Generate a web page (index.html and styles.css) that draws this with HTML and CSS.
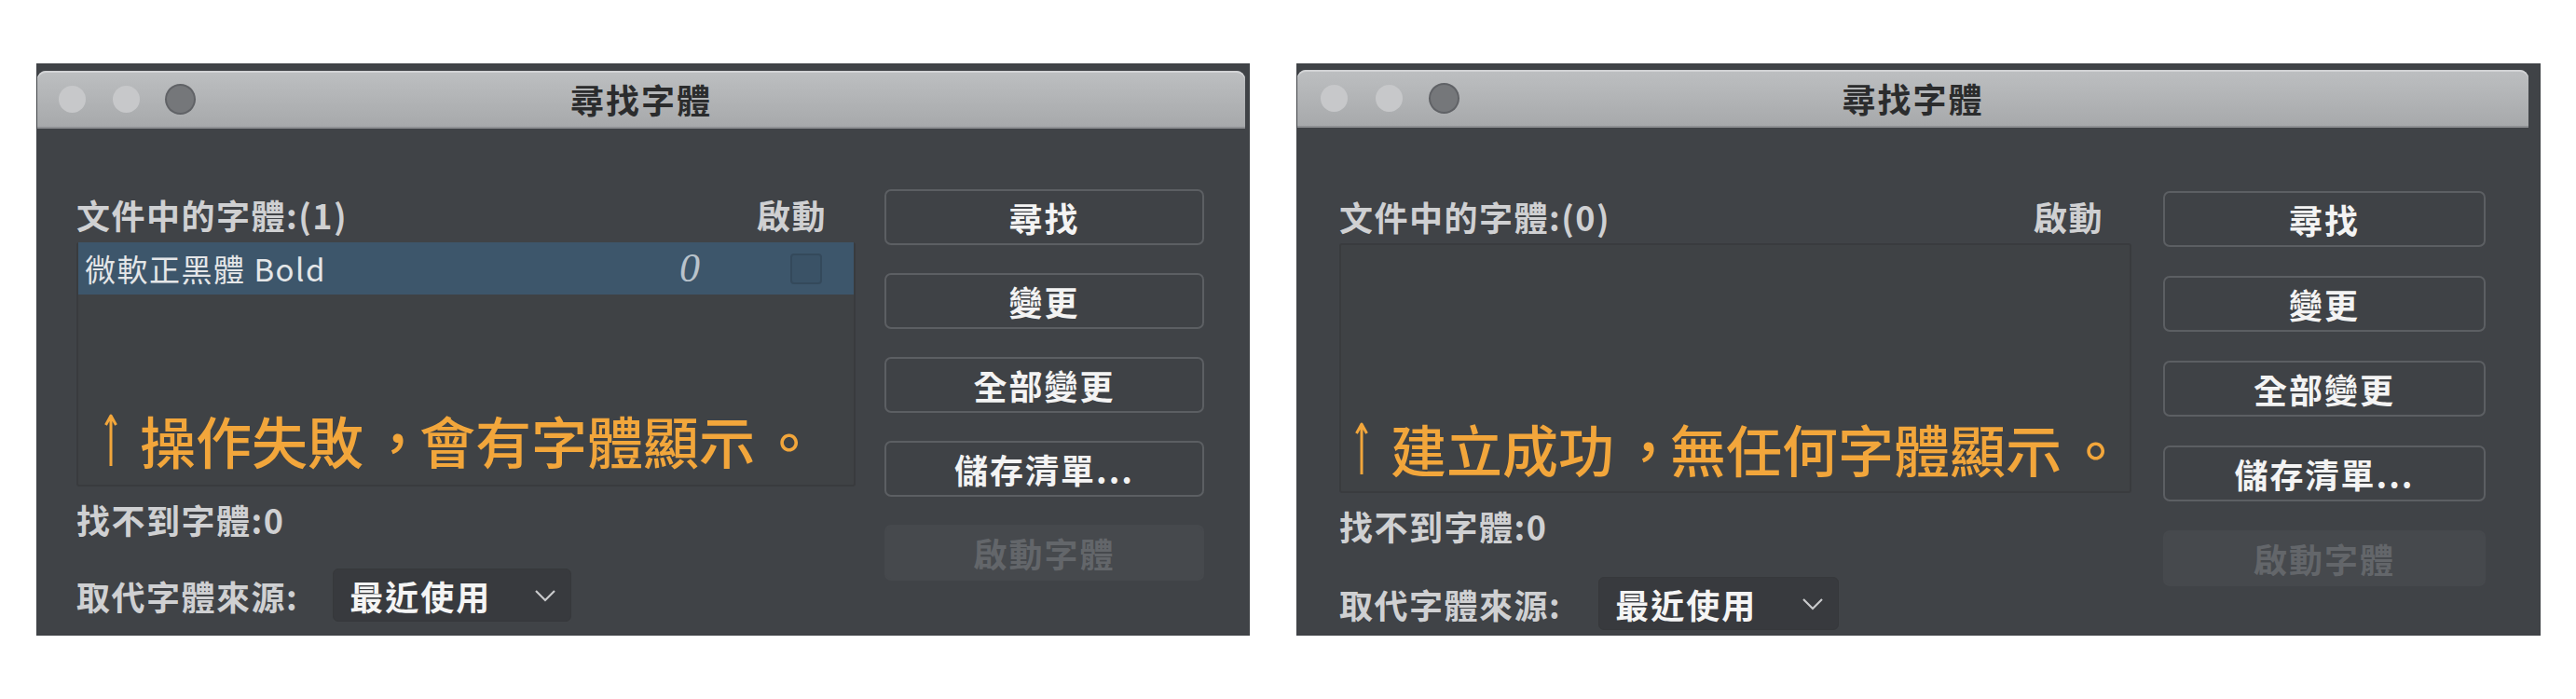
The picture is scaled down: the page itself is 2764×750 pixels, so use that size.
FILE: index.html
```html
<!DOCTYPE html>
<html lang="zh-Hant">
<head>
<meta charset="utf-8">
<title>尋找字體</title>
<link rel="stylesheet" href="styles.css">
</head>
<body>
<div class="stage">
  <section class="win win--a">
    <header class="titlebar">
      <div class="lights"><span class="light"></span><span class="light"></span><span class="light light--on"></span></div>
      <h1 class="title">尋找字體</h1>
      <div></div>
    </header>
    <div class="body">
      <div class="left">
        <div class="list-head"><span>文件中的字體:(1)</span><span class="col-on">啟動</span></div>
        <div class="list">
          <div class="row">
            <span class="row-name">微軟正黑體 Bold</span>
            <span class="row-type">0</span>
            <span class="check"></span>
          </div>
          <p class="note"><svg class="arrow" viewBox="0 0 20 58" width="20" height="58"><path d="M10 3 V57 M4.5 13 L10 3 L15.5 13" fill="none" stroke="#f2a63b" stroke-width="3" stroke-linejoin="round"/></svg><span>操作失敗<span class="punct">，</span>會有字體顯示<span class="punct">。</span></span></p>
        </div>
        <div class="missing">找不到字體:0</div>
        <div class="replace">
          <span>取代字體來源:</span>
          <div class="select"><span>最近使用</span><svg class="chev" viewBox="0 0 24 14" width="24" height="14"><path d="M2 2 L12 12 L22 2" fill="none" stroke="#c9cacc" stroke-width="2.2"/></svg></div>
        </div>
      </div>
      <div class="buttons">
        <div class="btn">尋找</div>
        <div class="btn">變更</div>
        <div class="btn">全部變更</div>
        <div class="btn">儲存清單...</div>
        <div class="btn btn--off">啟動字體</div>
      </div>
    </div>
  </section>

  <section class="win win--b">
    <header class="titlebar">
      <div class="lights"><span class="light"></span><span class="light"></span><span class="light light--on"></span></div>
      <h1 class="title">尋找字體</h1>
      <div></div>
    </header>
    <div class="body">
      <div class="left">
        <div class="list-head"><span>文件中的字體:(0)</span><span class="col-on">啟動</span></div>
        <div class="list">
          <p class="note"><svg class="arrow" viewBox="0 0 20 58" width="20" height="58"><path d="M10 3 V57 M4.5 13 L10 3 L15.5 13" fill="none" stroke="#f2a63b" stroke-width="3" stroke-linejoin="round"/></svg><span>建立成功<span class="punct">，</span>無任何字體顯示<span class="punct">。</span></span></p>
        </div>
        <div class="missing">找不到字體:0</div>
        <div class="replace">
          <span>取代字體來源:</span>
          <div class="select"><span>最近使用</span><svg class="chev" viewBox="0 0 24 14" width="24" height="14"><path d="M2 2 L12 12 L22 2" fill="none" stroke="#c9cacc" stroke-width="2.2"/></svg></div>
        </div>
      </div>
      <div class="buttons">
        <div class="btn">尋找</div>
        <div class="btn">變更</div>
        <div class="btn">全部變更</div>
        <div class="btn">儲存清單...</div>
        <div class="btn btn--off">啟動字體</div>
      </div>
    </div>
  </section>
</div>
</body>
</html>
```

FILE: styles.css
```css
* { box-sizing: border-box; }

html, body {
  margin: 0;
  padding: 0;
  background: #ffffff;
}

body {
  width: 2764px;
  height: 750px;
  overflow: hidden;
  font-family: "Noto Sans CJK TC", "Noto Sans", sans-serif;
}

.stage {
  display: flex;
  gap: 50px;
  padding: 68px 0 0 39px;
}

.win {
  height: 614px;
  background: #404347;
  display: flex;
  flex-direction: column;
}

.win--a {
  width: 1302px;
  padding: 8px 5px 0 1px;
}

.win--b {
  width: 1335px;
  padding: 7px 13px 0 1px;
}

/* title bar */
.titlebar {
  height: 62px;
  flex: none;
  display: grid;
  grid-template-columns: 1fr auto 1fr;
  align-items: center;
  background: linear-gradient(#bdbfc1, #a7a9ab);
  border-radius: 9px 9px 0 0;
  box-shadow: inset 0 2px 0 #d2d3d5;
  border-bottom: 2px solid #8e9093;
}

.lights {
  display: flex;
  gap: 29px;
  padding-left: 23px;
}

.win--b .lights {
  padding-left: 25px;
  gap: 30px;
}

.light {
  width: 29px;
  height: 29px;
  border-radius: 50%;
  background: #c7c8ca;
}

.light--on {
  background: #75777a;
  box-shadow: 0 0 0 2px #606266;
}

.title {
  margin: 0;
  font-size: 36px;
  line-height: 44px;
  font-weight: 700;
  letter-spacing: 2px;
  color: #2b2c2d;
}

/* body */
.body {
  flex: 1;
  display: grid;
  align-items: start;
  color: #cfd0d2;
}

.win--a .body {
  padding: 65px 0 0 42px;
  grid-template-columns: 836px 343px;
  column-gap: 31px;
}

.win--b .body {
  padding: 68px 0 0 45px;
  grid-template-columns: 850px 346px;
  column-gap: 34px;
}

.left {
  display: flex;
  flex-direction: column;
}

.list-head {
  display: flex;
  justify-content: space-between;
  height: 57px;
  padding-top: 7px;
  padding-right: 31px;
  font-size: 36px;
  line-height: 40px;
  font-weight: 700;
  letter-spacing: 1.5px;
}

.win--b .list-head {
  height: 56px;
  padding-right: 30px;
}

.list {
  position: relative;
  height: 262px;
  border: 2px solid #393b3e;
  border-radius: 3px;
  background: #3f4245;
}

.win--b .list {
  height: 268px;
}

.row {
  display: flex;
  align-items: center;
  height: 56px;
  margin-top: -2px;
  padding-left: 7px;
  padding-right: 34px;
  background: #3d566b;
  color: #e4e6e8;
}

.row-name {
  flex: 1;
  font-size: 33px;
  letter-spacing: 1.5px;
  line-height: 40px;
}

.row-type {
  width: 32px;
  margin-right: 92px;
  font-family: "Liberation Serif", serif;
  font-style: italic;
  font-size: 44px;
  line-height: 40px;
  color: #b9c3cc;
  text-align: center;
}

.check {
  width: 34px;
  height: 33px;
  border: 2px solid #34495b;
  border-radius: 4px;
  background: #3a5266;
}

/* annotation overlay */
.note {
  position: absolute;
  margin: 0;
  display: flex;
  align-items: center;
  font-size: 60px;
  line-height: 60px;
  font-weight: 500;
  color: #f2a63b;
  white-space: nowrap;
}

.punct {
  font-feature-settings: "halt" 1;
  margin-left: 0.36em;
  margin-right: 0.14em;
}

.win--a .note {
  left: 25px;
  top: 180px;
}

.win--b .note {
  left: 12px;
  top: 188px;
}

.arrow {
  margin-right: 21px;
  flex: none;
}

.missing {
  margin-top: 15px;
  font-size: 36px;
  line-height: 40px;
  font-weight: 700;
  letter-spacing: 1.5px;
}

.replace {
  display: flex;
  align-items: center;
  height: 57px;
  margin-top: 33px;
  font-size: 36px;
  font-weight: 700;
  letter-spacing: 1.5px;
}

.win--b .replace {
  margin-top: 35px;
}

.select {
  display: flex;
  align-items: center;
  justify-content: space-between;
  height: 57px;
  width: 256px;
  margin-left: 37px;
  padding: 0 15px 0 17px;
  border-radius: 6px;
  background: #383a3e;
  border: 1px solid #36383b;
  color: #f4f4f4;
  font-weight: 700;
  letter-spacing: 2px;
}

.win--b .select {
  width: 258px;
  margin-left: 40px;
}

.chev {
  flex: none;
}

/* buttons */
.buttons {
  display: flex;
  flex-direction: column;
  gap: 30px;
}

.win--b .buttons {
  gap: 31px;
}

.btn {
  height: 60px;
  display: flex;
  align-items: center;
  justify-content: center;
  border: 2px solid #5c5f63;
  border-radius: 7px;
  background: #3f4246;
  color: #f3f3f3;
  font-size: 36px;
  font-weight: 700;
  letter-spacing: 2px;
}

.btn--off {
  border-color: #46494d;
  background: #46494d;
  color: #63666a;
}
```
